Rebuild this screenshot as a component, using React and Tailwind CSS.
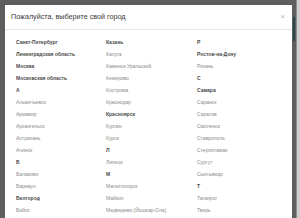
import React from 'react';

const columns = [
    [
        ['Санкт-Петербург', true],
        ['Ленинградская область', true],
        ['Москва', true],
        ['Московская область', true],
        ['А', true],
        ['Альметьевск'],
        ['Армавир'],
        ['Архангельск'],
        ['Астрахань'],
        ['Ачинск'],
        ['Б', true],
        ['Балаково'],
        ['Барнаул'],
        ['Белгород', true],
        ['Бийск'],
    ],
    [
        ['Казань', true],
        ['Калуга'],
        ['Каменск-Уральский'],
        ['Кемерово'],
        ['Кострома'],
        ['Краснодар'],
        ['Красноярск', true],
        ['Курган'],
        ['Курск'],
        ['Л', true],
        ['Липецк'],
        ['М', true],
        ['Магнитогорск'],
        ['Майкоп'],
        ['Медведево (Йошкар-Ола)'],
    ],
    [
        ['Р', true],
        ['Ростов-на-Дону', true],
        ['Рязань'],
        ['С', true],
        ['Самара', true],
        ['Саранск'],
        ['Саратов'],
        ['Смоленск'],
        ['Ставрополь'],
        ['Стерлитамак'],
        ['Сургут'],
        ['Сыктывкар'],
        ['Т', true],
        ['Таганрог'],
        ['Тверь'],
    ],
];

export default function App() {
    return (
        <div className="w-[300px] h-[218px] overflow-hidden flex bg-[#5e5e5e] font-['Liberation_Sans',Arial,sans-serif]">
            {/* Modal */}
            <div className="ml-[5px] mt-[5px] w-[287px] h-[240px] bg-white shrink-0">
                <div className="h-[25px] pl-[6px] pr-[7px] flex items-center justify-between border-b border-[#e8e8e8]">
                    <span className="text-[7.2px] text-[#3a3a3a]">Пожалуйста, выберите свой город</span>
                    <span className="text-[8px] leading-none text-[#b5b5b5]">×</span>
                </div>
                <div className="pt-[6px] px-[11px] grid grid-cols-[90px_91px_1fr]">
                    {columns.map((col, i) => (
                        <div key={i} className="flex flex-col">
                            {col.map(([name, bold]) => (
                                <div
                                    key={name}
                                    className={`h-[12px] leading-[12px] text-[5px] whitespace-nowrap ${
                                        bold ? 'font-bold text-[#4a4a4a]' : 'text-[#8c8c8c]'
                                    }`}
                                >
                                    {name}
                                </div>
                            ))}
                        </div>
                    ))}
                </div>
            </div>

            {/* Page behind overlay */}
            <div className="w-[4px] shrink-0 flex flex-col">
                <div className="h-[17px]" />
                <div className="h-[24px] ml-[1px] w-[2px] bg-[#2c4650]" />
            </div>

            {/* Scrollbar */}
            <div className="w-[4px] shrink-0 bg-[#cfcfcf] border-l border-[#8a8a8a]" />
        </div>
    );
}
